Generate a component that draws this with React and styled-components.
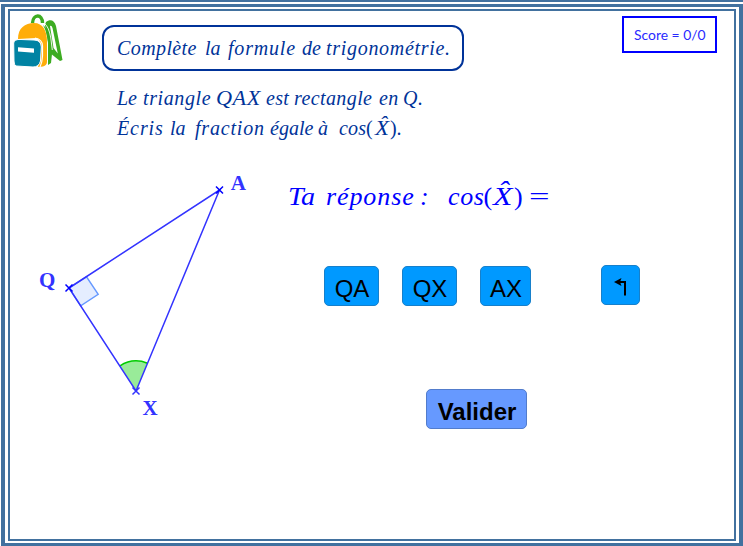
import React from "react";
import styled, { createGlobalStyle } from "styled-components";

const Global = createGlobalStyle`
  * { box-sizing: border-box; }
  body { margin: 0; background: #fff; overflow: hidden; }
`;

const Page = styled.div`
  width: 743px;
  height: 546px;
  padding-top: 2px;
  border-top: 2px solid #42719f;
  background: #fff;
`;

const OuterFrame = styled.div`
  height: 542px;
  margin-left: 1px;
  padding: 2px 3px 2px 3px;
  border: solid #42719f;
  border-width: 3px 4px;
`;

const InnerFrame = styled.main`
  height: 532px;
  border: 2px solid #42719f;
`;

const Header = styled.header`
  display: flex;
  align-items: flex-start;
  height: 74px;
`;

const Logo = styled.svg`
  flex: none;
  width: 54px;
  height: 60px;
  margin-right: 38px;
`;

const Title = styled.h1`
  width: 362px;
  height: 46px;
  margin: 14px 158px 0 0;
  padding: 9px 0 0 13px;
  border: 2px solid #003399;
  border-radius: 12px;
`;

const Score = styled.div`
  width: 95px;
  height: 37px;
  margin-top: 5px;
  padding-left: 10px;
  border: 2px solid #0000ff;
  color: #2a2aff;
  font: 13.9px/33px Lato, sans-serif;
  white-space: pre;
`;

const Line = styled.div`
  display: flex;
  height: 24px;
  color: ${(p) => p.$color || "#003399"};
  font: italic ${(p) => p.$size || 20}px/24px "Liberation Serif", serif;
`;

const Word = styled.span`
  flex: none;
  width: ${(p) => p.$w}px;
  letter-spacing: ${(p) => p.$s || 0}px;
  white-space: pre;
  transform: scaleX(${(p) => p.$stretch || 1});
  transform-origin: left;
`;

const Upright = styled(Word)`
  font-style: normal;
`;

const Hatted = styled(Word)`
  position: relative;
  &::after {
    content: "ˆ";
    position: absolute;
    left: ${(p) => p.$hx}px;
    top: ${(p) => p.$hy}px;
    letter-spacing: 0;
  }
`;

const Statement = styled.section`
  display: flex;
  flex-direction: column;
  gap: 6px;
  margin: 1px 0 0 107px;
  height: 84px;
`;

const Workspace = styled.div`
  display: flex;
`;

const Figure = styled.svg`
  flex: none;
  width: 278px;
  height: 270px;
`;

const Answer = styled.section`
  flex: 1;
  padding-top: 15px;
`;

const Keys = styled.div`
  display: flex;
  height: 41px;
  margin: 56px 0 0 36px;
`;

const Key = styled.button`
  flex: none;
  width: ${(p) => p.$w}px;
  height: 40px;
  margin: ${(p) => p.$top ?? 1}px ${(p) => p.$gap || 0}px 0 0;
  padding: 5px 0 0 1px;
  border: 1px solid #1780cb;
  border-radius: 5px;
  background: #0099ff;
  color: #000;
  font: 24px/33px "Liberation Sans", sans-serif;
  text-align: center;
`;

const Submit = styled(Key)`
  display: block;
  margin: 83px 0 0 138px;
  border-color: #527ccc;
  background: #6699ff;
  font-weight: bold;
`;

const ArrowIcon = styled.svg`
  display: block;
  margin: -2px auto 0;
`;

function Backpack() {
  return (
    <Logo viewBox="10 11 54 60">
      <path d="M32.5 23C33 14 42.5 13.5 42.5 23" fill="none" stroke="#3dac22" strokeWidth="3.4" />
      <path
        fillRule="evenodd"
        fill="#3dac22"
        d="M46 22C50 19 54.5 20 56 26L62.5 60L60 61L50 53L45 25ZM50 26L53.5 48L57.8 53.5L52.5 28Q51.5 25 50 26Z"
      />
      <path d="M43 25Q47.5 28 49 37L52 54L51 63L48 65V43Q47 32 43 25Z" fill="#3dac22" />
      <path d="M44.5 23.5Q49 27 50.8 38L52.3 50" fill="none" stroke="#fff" strokeWidth="0.9" />
      <path d="M18 39C18 28 25 23 34 23C43 23 47 31 47 41V62Q47 65 43 66.5L38 67L40 60Q44 40 36 38Z" fill="#ffad0a" />
      <path d="M35 38Q42.3 39 42.5 46V56Q42.3 62 40 67" fill="none" stroke="#fff" strokeWidth="1.2" />
      <path
        d="M13.7 43Q14 39 21 39.5L34 40Q41 40 41.3 47L40.5 61Q39 67 33 67L16 66Q14 65 14 61Z"
        fill="#0083a3"
        stroke="#fff"
        strokeWidth="1"
      />
      <path d="M18 47.3L34 48.5V52.7L18 51.5Z" fill="#fff" />
    </Logo>
  );
}

function Cross({ x, y, light }) {
  return (
    <path
      d={`M${x - 3.5} ${y - 3.5}l7 7m0-7l-7 7`}
      fill="none"
      stroke={light ? "#3333ff" : "#0000ff"}
      strokeWidth="1.5"
    />
  );
}

function Triangle() {
  return (
    <Figure viewBox="10 170 278 270">
      <path d="M69 288L86.5 276.8L98.2 294.3L80.7 305.8Z" fill="#e5edff" stroke="#6699ff" strokeWidth="1.4" />
      <path d="M136 391L120 365.8A30 30 0 0 1 147.5 363.2Z" fill="#99eb99" />
      <path d="M120 365.8A30 30 0 0 1 147.5 363.2" fill="none" stroke="#00cc00" strokeWidth="1.5" />
      <path d="M69 288L219.5 190L136 391Z" fill="none" stroke="#3333ff" strokeWidth="1.5" />
      <Cross x={69} y={288} />
      <Cross x={219.5} y={190} />
      <Cross x={136} y={391} light />
      <g fill="#3333ff" fontFamily="Liberation Serif, serif" fontWeight="bold" fontSize="21">
        <text x="230.7" y="190">A</text>
        <text x="39" y="286.5">Q</text>
        <text x="142.5" y="415">X</text>
      </g>
    </Figure>
  );
}

export default function App() {
  return (
    <>
      <Global />
      <Page>
        <OuterFrame>
          <InnerFrame>
            <Header>
              <Backpack />
              <Title>
                <Line>
                  <Word $w={88} $s={0.4}>Complète</Word>
                  <Word $w={23}>la</Word>
                  <Word $w={74} $s={0.8}>formule</Word>
                  <Word $w={24}>de</Word>
                  <Word $w={125} $s={0.7}>trigonométrie.</Word>
                </Line>
              </Title>
              <Score>Score = 0/0</Score>
            </Header>
            <Statement>
              <Line>
                <Word $w={26}>Le</Word>
                <Word $w={73} $s={0.6}>triangle</Word>
                <Word $w={50} $s={0.5} $stretch={1.11}>QAX</Word>
                <Word $w={28} $s={0.3}>est</Word>
                <Word $w={85} $s={0.4}>rectangle</Word>
                <Word $w={24} $s={0.3}>en</Word>
                <Word $w={24} $s={0.5}>Q.</Word>
              </Line>
              <Line>
                <Word $w={53} $s={0.9}>Écris</Word>
                <Word $w={25}>la</Word>
                <Word $w={75} $s={0.8}>fraction</Word>
                <Word $w={48}>égale</Word>
                <Word $w={21}>à</Word>
                <Word $w={27} $s={0.2}>cos</Word>
                <Upright $w={8.5}>(</Upright>
                <Hatted $w={15.5} $hx={4} $hy={-4} $stretch={1.15}>X</Hatted>
                <Upright $w={7}>)</Upright>
                <Word $w={6}>.</Word>
              </Line>
            </Statement>
            <Workspace>
              <Triangle />
              <Answer>
                <Line $color="#0000ff" $size={26}>
                  <Word $w={38} $s={0} $stretch={1.08}>Ta</Word>
                  <Word $w={94} $s={0.9}>réponse</Word>
                  <Word $w={28}>:</Word>
                  <Word $w={35.5} $s={0.6}>cos</Word>
                  <Upright $w={9.5}>(</Upright>
                  <Hatted $w={21} $hx={4} $hy={-6} $stretch={1.22}>X</Hatted>
                  <Upright $w={15}>)</Upright>
                  <Upright $w={22} $stretch={1.4}>=</Upright>
                </Line>
                <Keys>
                  <Key $w={55} $gap={23}>QA</Key>
                  <Key $w={55} $gap={23}>QX</Key>
                  <Key $w={51} $gap={70}>AX</Key>
                  <Key $w={39} $top={0} aria-label="Effacer">
                    <ArrowIcon width="14" height="20" viewBox="0 0 14 20">
                      <path d="M4 5H11V18.5" fill="none" stroke="#000" strokeWidth="2" />
                      <path d="M0 5L7.5 1L6 5L7.5 9Z" />
                    </ArrowIcon>
                  </Key>
                </Keys>
                <Submit $w={101}>Valider</Submit>
              </Answer>
            </Workspace>
          </InnerFrame>
        </OuterFrame>
      </Page>
    </>
  );
}
